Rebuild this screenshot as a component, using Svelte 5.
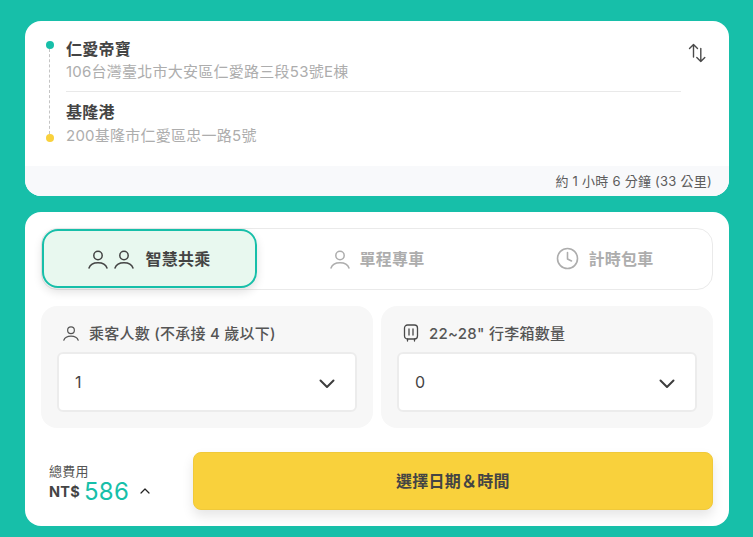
<script>
  const tabs = [
    { label: '智慧共乘', icon: 'double', active: true },
    { label: '單程專車', icon: 'person', active: false },
    { label: '計時包車', icon: 'clock', active: false },
  ];
</script>

{#snippet person(size)}
  <svg width={size} height={size} viewBox="0 0 20 20" fill="none" stroke="currentColor" stroke-width="1.5" stroke-linecap="round">
    <circle cx="10" cy="6.5" r="4.2" />
    <path d="M1 19c1.2-3.6 4.5-5.2 9-5.2s7.800 1.600 9 5.200" />
  </svg>
{/snippet}

{#snippet chevron()}
  <svg class="chev" width="16" height="10" viewBox="0 0 16 10" fill="none" stroke="#3d3d3d" stroke-width="2" stroke-linecap="round" stroke-linejoin="round">
    <path d="M1.500 1.500 8 8l6.500-6.500" />
  </svg>
{/snippet}

<main class="page">
  <section class="card route">
    <div class="route-body">
      <div class="timeline">
        <span class="dot start"></span>
        <span class="dash"></span>
        <span class="dot end"></span>
      </div>
      <div class="stops">
        <div class="stop first">
          <div class="name">仁愛帝寶</div>
          <div class="addr">106台灣臺北市大安區仁愛路三段53號E棟</div>
        </div>
        <div class="stop">
          <div class="name">基隆港</div>
          <div class="addr second">200基隆市仁愛區忠一路5號</div>
        </div>
      </div>
      <svg class="swap" width="20" height="20" viewBox="0 0 20 20" fill="none" stroke="#4a4a4a" stroke-width="1.400" stroke-linecap="round" stroke-linejoin="round">
        <path d="M5.500 14V1.500M1.500 5.500l4-4 4 4" />
        <path d="M12.800 5.500v13M8.800 14.500l4 4 4-4" />
      </svg>
    </div>
    <div class="route-foot">約 1 小時 6 分鐘 (33 公里)</div>
  </section>

  <section class="card booking">
    <div class="tabs">
      {#each tabs as tab}
        <button class="tab" class:active={tab.active}>
          {#if tab.icon === 'double'}
            <span class="pair">{@render person(20)}{@render person(20)}</span>
          {:else if tab.icon === 'person'}
            {@render person(20)}
          {:else}
            <svg width="23" height="23" viewBox="0 0 23 23" fill="none" stroke="currentColor" stroke-width="1.600" stroke-linecap="round" stroke-linejoin="round">
              <circle cx="11.500" cy="11.500" r="10" />
              <path d="M11.500 5.500v6.500l4 2" />
            </svg>
          {/if}
          <span class="tab-text">{tab.label}</span>
        </button>
      {/each}
    </div>

    <div class="fields">
      <div class="field">
        <div class="field-label">
          {@render person(16)}
          <span class="label-text">乘客人數 (不承接 4 歲以下)</span>
        </div>
        <div class="select"><span>1</span>{@render chevron()}</div>
      </div>
      <div class="field">
        <div class="field-label">
          <svg width="16" height="18" viewBox="0 0 16 18" fill="none" stroke="#4a4a4a" stroke-width="1.300" stroke-linecap="round">
            <rect x="1.500" y="1" width="13" height="14" rx="3" />
            <path d="M6 5v6M10 5v6M4.500 15v2M11.500 15v2" />
          </svg>
          <span class="label-text">22~28" 行李箱數量</span>
        </div>
        <div class="select"><span>0</span>{@render chevron()}</div>
      </div>
    </div>

    <div class="checkout">
      <div class="total">
        <div class="total-label">總費用</div>
        <div class="total-price">
          <span class="cur">NT$</span>
          <span class="amount">586</span>
          <svg width="10" height="6" viewBox="0 0 10 6" fill="none" stroke="#222" stroke-width="1.200" stroke-linecap="round" stroke-linejoin="round">
            <path d="M1 5l4-4 4 4" />
          </svg>
        </div>
      </div>
      <button class="cta">選擇日期＆時間</button>
    </div>
  </section>
</main>

<style>
  :global(body) {
    background: #17bfa9;
  }

  .page {
    width: 753px;
    height: 537px;
    box-sizing: border-box;
    padding: 21px 24px 11px 25px;
    display: flex;
    flex-direction: column;
    gap: 16px;
    font-family: Inter, "Noto Sans CJK TC", sans-serif;
    letter-spacing: 0.25px;
    color: #444;
  }

  .card {
    background: #fff;
    border-radius: 16px;
    overflow: hidden;
  }

  .route-body {
    height: 145px;
    display: flex;
    padding: 0 16px 0 20px;
  }

  .timeline {
    width: 10px;
    padding-top: 20px;
    display: flex;
    flex-direction: column;
    align-items: center;
  }

  .dot {
    width: 8px;
    height: 8px;
    border-radius: 50%;
    flex: none;
  }

  .start {
    background: #17bfa9;
  }

  .end {
    background: #f9d13c;
  }

  .dash {
    height: 85px;
    margin-right: 1px;
    border-left: 1px dashed #c4c4c4;
  }

  .stops {
    width: 615px;
    margin-left: 11px;
    padding-top: 17px;
  }

  .stop.first {
    height: 53px;
    border-bottom: 1px solid #e9e9e9;
    margin-bottom: 9px;
  }

  .name {
    font-size: 16px;
    line-height: 22px;
    font-weight: 700;
  }

  .addr {
    font-size: 15px;
    line-height: 20px;
    color: #adadad;
    margin-top: 2px;
  }

  .addr.second {
    margin-top: 3px;
  }

  .swap {
    margin: 22px 0 0 7px;
    flex: none;
  }

  .route-foot {
    height: 30px;
    background: #f8f9fb;
    padding-right: 17px;
    text-align: right;
    font-size: 13px;
    line-height: 30px;
    color: #5c5c5c;
  }

  .booking {
    height: 314px;
    box-sizing: border-box;
    padding: 16px;
  }

  .tabs {
    display: grid;
    grid-template-columns: 215px 241px 214px;
    height: 62px;
    box-sizing: border-box;
    padding: 1px 0;
    border: 1px solid #eaeaea;
    border-radius: 16px;
  }

  .tab {
    margin: -1px 0 0 0;
    padding: 0;
    border: 2px solid transparent;
    border-radius: 16px;
    background: none;
    display: flex;
    align-items: center;
    justify-content: center;
    gap: 9px;
    font: inherit;
    letter-spacing: inherit;
    font-size: 16px;
    font-weight: 700;
    color: #adadad;
  }

  .tab.active {
    background: #e8f8ef;
    border-color: #17bfa9;
    color: #444;
    box-shadow: 0 4px 10px rgba(0, 0, 0, 0.12);
  }

  .tab-text,
  .label-text {
    margin-top: -2px;
  }

  .pair {
    display: flex;
    gap: 6px;
    margin-right: 2px;
  }

  .fields {
    display: grid;
    grid-template-columns: 332px 332px;
    gap: 8px;
    margin-top: 16px;
  }

  .field {
    height: 122px;
    box-sizing: border-box;
    padding: 16px;
    background: #f7f7f7;
    border-radius: 16px;
  }

  .field-label {
    height: 22px;
    display: flex;
    align-items: center;
    gap: 10px;
    padding-left: 6px;
    font-size: 15px;
    font-weight: 500;
    color: #555;
  }

  .select {
    margin-top: 8px;
    height: 60px;
    box-sizing: border-box;
    border: 2px solid #ececec;
    border-radius: 6px;
    background: #fff;
    display: flex;
    align-items: center;
    justify-content: space-between;
    padding: 0 20px 0 16px;
    font-size: 16px;
  }

  .chev {
    margin-top: 3px;
  }

  .checkout {
    display: flex;
    margin-top: 24px;
  }

  .total {
    width: 152px;
    padding: 12px 0 0 8px;
    box-sizing: border-box;
  }

  .total-label {
    font-size: 13px;
    line-height: 15px;
    color: #555;
  }

  .total-price {
    display: flex;
    align-items: center;
    height: 24px;
  }

  .cur {
    font-size: 14.500px;
    font-weight: 700;
  }

  .amount {
    font-size: 24px;
    color: #17bfa9;
    margin: 0 11px 0 4px;
  }

  .cta {
    width: 520px;
    height: 58px;
    padding: 0 0 2px;
    border: 1px solid #f0c93a;
    border-radius: 8px;
    background: #f9d13c;
    box-shadow: 0 6px 12px rgba(0, 0, 0, 0.1);
    font: inherit;
    letter-spacing: inherit;
    font-size: 16px;
    font-weight: 700;
    color: #444;
  }
</style>
